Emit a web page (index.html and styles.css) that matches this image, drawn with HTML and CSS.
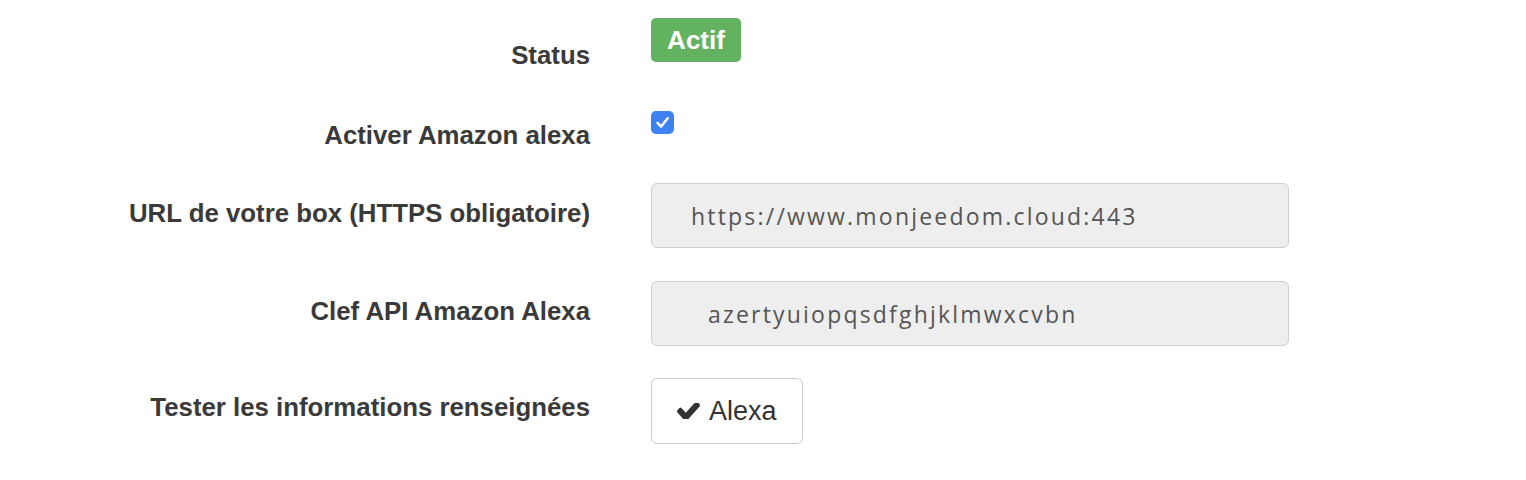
FILE: index.html
```html
<!DOCTYPE html>
<html lang="fr">
<head>
    <meta charset="UTF-8">
    <title>Configuration Alexa</title>
    <link rel="stylesheet" href="styles.css">
</head>
<body>
    <form class="config-form">
        <!-- Statut du plugin -->
        <div class="row row-status">
            <label class="row-label">Status</label>
            <div class="row-control">
                <span class="badge-success">Actif</span>
            </div>
        </div>

        <div class="row row-check">
            <label class="row-label">Activer Amazon alexa</label>
            <div class="row-control">
                <span class="checkbox checked">
                    <svg viewBox="0 0 23 23" width="23" height="23"><path d="M6.5 11.8l3.6 3.8 6.6-8.4" fill="none" stroke="#fff" stroke-width="2.4" stroke-linecap="round" stroke-linejoin="round"/></svg>
                </span>
            </div>
        </div>

        <div class="row row-input">
            <label class="row-label">URL de votre box (HTTPS obligatoire)</label>
            <div class="row-control">
                <input type="text" class="field" value="https://www.monjeedom.cloud:443" readonly>
            </div>
        </div>

        <div class="row row-input">
            <label class="row-label">Clef API Amazon Alexa</label>
            <div class="row-control">
                <input type="text" class="field field-key" value="azertyuiopqsdfghjklmwxcvbn" readonly>
            </div>
        </div>

        <div class="row row-button">
            <label class="row-label">Tester les informations renseignées</label>
            <div class="row-control">
                <button type="button" class="btn-test">
                    <svg class="icon-check" viewBox="121 430 1550 956" width="23" height="16" preserveAspectRatio="none"><path d="M1671 566q0 40-28 68l-724 724-136 136q-28 28-68 28t-68-28l-136-136-362-362q-28-28-28-68t28-68l136-136q28-28 68-28t68 28l294 295 656-657q28-28 68-28t68 28l136 136q28 28 28 68z" fill="#333"/></svg>
                    Alexa
                </button>
            </div>
        </div>
    </form>
</body>
</html>
```

FILE: styles.css
```css
/* Genel */
body {
    margin: 0;
    background-color: #fff;
    color: #3a3a3a;
    font-family: "Liberation Sans", Arial, sans-serif;
}

.config-form {
    padding-top: 18px;
}

.row {
    display: flex;
    align-items: flex-start;
}

.row-label {
    width: 590px;
    text-align: right;
    font-size: 25.8px;
    font-weight: bold;
    line-height: 30px;
}

.row-control {
    margin-left: 61px;
}

/* Satirlar */
.row-status .row-label {
    padding-top: 22px;
}

.row-check {
    margin-top: 41px;
}

.row-check .row-label {
    padding-top: 9px;
}

.row-input {
    margin-top: 33px;
}

.row-input .row-label {
    padding-top: 15px;
}

.row-button {
    margin-top: 32px;
}

.row-button .row-label {
    padding-top: 14px;
}

/* Kontroller */
.badge-success {
    display: inline-block;
    width: 90px;
    height: 44px;
    line-height: 44px;
    text-align: center;
    background-color: #63b25f;
    color: #fff;
    font-size: 26px;
    font-weight: bold;
    border-radius: 5px;
}

.checkbox {
    display: block;
    width: 23px;
    height: 23px;
    border-radius: 5px;
    background-color: #3d82f0;
}

.checkbox svg {
    display: block;
}

.field {
    box-sizing: border-box;
    width: 638px;
    height: 65px;
    padding: 0 0 0 39px;
    border: 1px solid #cfcfcf;
    border-radius: 6px;
    background-color: #eee;
    color: #555;
    font-family: "Open Sans", sans-serif;
    font-size: 23px;
    letter-spacing: 2.2px;
    outline: none;
}

.field-key {
    padding-left: 56px;
}

.btn-test {
    display: flex;
    align-items: center;
    box-sizing: border-box;
    width: 152px;
    height: 66px;
    padding: 0 0 0 25px;
    border: 1px solid #ccc;
    border-radius: 6px;
    background-color: #fff;
    color: #333;
    font-family: "Liberation Sans", Arial, sans-serif;
    font-size: 27px;
    cursor: pointer;
}

.icon-check {
    margin-right: 9px;
}
```
